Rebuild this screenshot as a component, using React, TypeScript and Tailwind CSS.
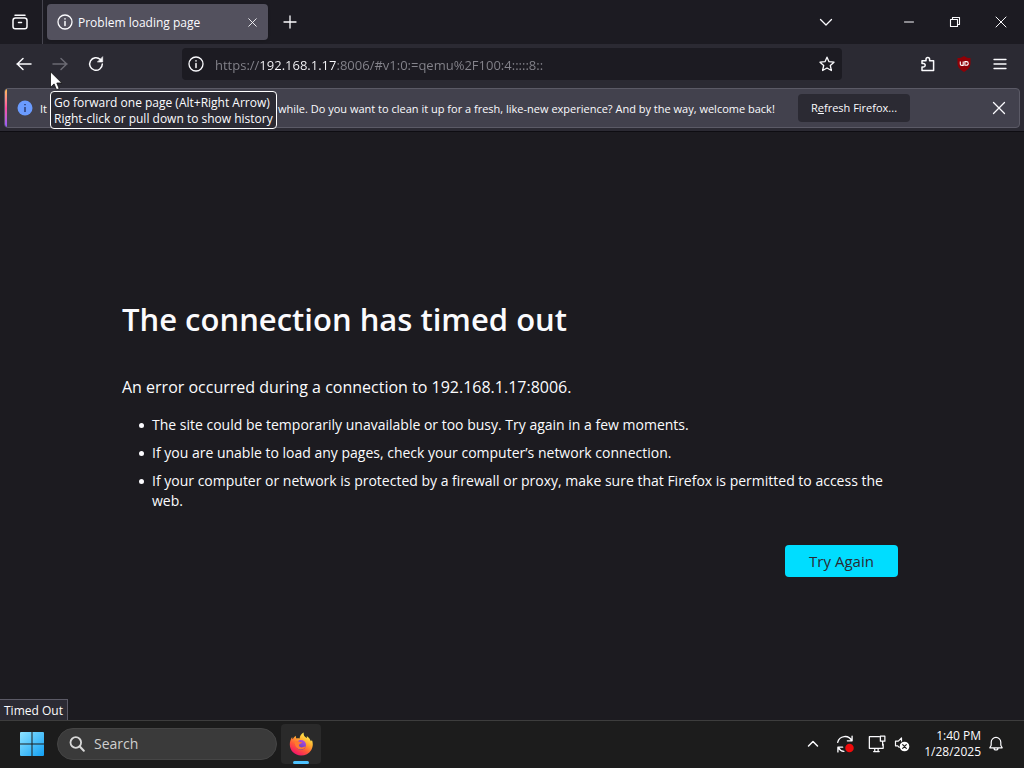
import type { ReactNode } from "react";

const Icon = ({ size = 16, className = "", children }: { size?: number; className?: string; children: ReactNode }) => (
  <svg width={size} height={size} viewBox="0 0 16 16" fill="none" stroke="currentColor" strokeWidth="1.3" strokeLinecap="round" strokeLinejoin="round" className={className} aria-hidden="true">
    {children}
  </svg>
);

const InfoIcon = () => (
  <Icon>
    <circle cx="8" cy="8" r="7" />
    <path d="M8 7.4v4M8 4.8v.2" strokeWidth="1.5" />
  </Icon>
);

const CloseIcon = ({ size }: { size: number }) => (
  <Icon size={size}>
    <path d="M2.5 2.5l11 11M13.5 2.5l-11 11" />
  </Icon>
);

const IconButton = ({ label, className = "", children }: { label: string; className?: string; children: ReactNode }) => (
  <button type="button" aria-label={label} className={`flex h-8 shrink-0 items-center justify-center ${className}`}>
    {children}
  </button>
);

const FirefoxLogo = () => (
  <svg width="24" height="24" viewBox="0 0 24 24" aria-hidden="true">
    <defs>
      <linearGradient id="fx-body" x1="18" y1="2" x2="6" y2="22" gradientUnits="userSpaceOnUse">
        <stop offset="0" stopColor="#fff44f" />
        <stop offset="0.35" stopColor="#ffa930" />
        <stop offset="0.65" stopColor="#ff5a36" />
        <stop offset="1" stopColor="#f4126b" />
      </linearGradient>
      <linearGradient id="fx-globe" x1="14" y1="8" x2="10" y2="17" gradientUnits="userSpaceOnUse">
        <stop offset="0" stopColor="#b44be0" />
        <stop offset="1" stopColor="#5a3fc0" />
      </linearGradient>
    </defs>
    <path d="M14.8.5c-.5 2 .3 3.3 1.8 4.7l1.3.9c.1-.8 0-1.500-.2-2.200 2.300 1.400 3.600 3.400 4.200 5.400.9-.3.9-1 .8-1.700C24.400 11 24 15 22.300 17.900 20 21.700 16.300 23.500 12 23.500 5.800 23.500.8 18.700.8 12.600c0-3 .9-5.500 2.400-7.500 0 .9.100 1.500.5 2.200.8-1.600 1.700-2.600 3.200-3.500-.2 1 .1 2 .8 2.700 1-.3 2-.2 2.900 0C10.700 4 12.300 1.700 14.800.5z" fill="url(#fx-body)" />
    <circle cx="12" cy="13" r="5" fill="url(#fx-globe)" />
    <path d="M5.800 9.600c1.600-.9 3.500-.7 4.700.1.800.5 2 .6 2.700.6-.2 1.300-2.700 1.400-3.200 2.500-.4 1.400.8 2.500 2.400 2.600 1.900 0 2.900-1.300 4.300-.8-1 2-3 3.200-5.200 3-3.600-.2-6.100-3.700-5.700-8z" fill="#ff7a2f" />
  </svg>
);

const WindowsLogo = () => (
  <svg width="24" height="24" viewBox="0 0 24 24" aria-hidden="true">
    <defs>
      <linearGradient id="win" x1="0" y1="0" x2="24" y2="24" gradientUnits="userSpaceOnUse">
        <stop offset="0" stopColor="#8de3ff" />
        <stop offset="1" stopColor="#12a0f5" />
      </linearGradient>
    </defs>
    <path d="M0 1q0-1 1-1h10.500v11.500H0zM12.500 0H23q1 0 1 1v10.500H12.500zM0 12.500h11.500V24H1q-1 0-1-1zM12.500 12.500H24V23q0 1-1 1H12.500z" fill="url(#win)" />
  </svg>
);

const TabBar = () => (
  <header className="flex h-11 items-center bg-[#1c1b22]">
    <div className="flex h-full w-[43px] shrink-0 items-center justify-center border-r border-[#46454f] pr-0.5">
      <IconButton label="View recent browsing" className="w-8">
        <Icon>
          <path d="M3 1.200h10M3.500 4h9q2.500 0 2.500 2.500v6q0 2.300-2.300 2.300H3.300Q1 14.800 1 12.500v-6Q1 4 3.500 4zM6.500 8.500h3" strokeWidth="1.500" />
        </Icon>
      </IconButton>
    </div>
    <div className="ml-1 flex h-9 w-[221px] items-center rounded bg-[#53515e] pl-[10px] pr-1 shadow">
      <InfoIcon />
      <span className="ml-[5px] flex-1 truncate pt-0.5 text-[12px]">Problem loading page</span>
      <IconButton label="Close tab" className="w-6">
        <CloseIcon size={11} />
      </IconButton>
    </div>
    <IconButton label="Open a new tab" className="ml-[6px] w-8">
      <Icon>
        <path d="M8 2v12M2 8h12" />
      </Icon>
    </IconButton>
    <IconButton label="List all tabs" className="ml-auto mr-11 w-8">
      <Icon>
        <path d="M2.500 5.500L8 11l5.500-5.500" />
      </Icon>
    </IconButton>
    <IconButton label="Minimize" className="w-[46px]">
      <Icon>
        <path d="M3.500 8h9" strokeWidth="1" />
      </Icon>
    </IconButton>
    <IconButton label="Restore" className="w-[46px]">
      <Icon>
        <path d="M3.500 5.500h7v7h-7zM5.500 5.500v-2h7v7h-2" strokeWidth="1.100" />
      </Icon>
    </IconButton>
    <IconButton label="Close window" className="w-[46px]">
      <Icon>
        <path d="M3 3l10 10M13 3L3 13" strokeWidth="1" />
      </Icon>
    </IconButton>
  </header>
);

const ForwardButton = () => (
  <div className="relative">
    <IconButton label="Go forward" className="w-9 text-[#6b6a73]">
      <Icon>
        <path d="M1 8h14M9 2.500L14.700 8 9 13.500" strokeWidth="1.500" />
      </Icon>
    </IconButton>
    <div role="tooltip" className="absolute left-2 top-[43px] z-10 whitespace-nowrap rounded border border-white bg-[#2b2a33] px-[3px] pb-px pt-[3px] text-[12px] leading-4">
      Go forward one page (Alt+Right Arrow)
      <br />
      Right-click or pull down to show history
    </div>
    <svg width="13" height="20" viewBox="0 0 13 20" className="absolute left-2 top-[23px] z-20" aria-hidden="true">
      <path d="M.5.800v15.500l3.600-3.400 2.400 5.900 2.700-1.100-2.400-5.700h5z" fill="#fff" stroke="#111" strokeWidth=".8" />
    </svg>
  </div>
);

const NavBar = () => (
  <nav aria-label="Navigation" className="flex h-10 items-center bg-[#2b2a33] px-[6px]">
    <IconButton label="Go back" className="w-9">
      <Icon>
        <path d="M15 8H1M7 2.500L1.300 8 7 13.500" strokeWidth="1.500" />
      </Icon>
    </IconButton>
    <ForwardButton />
    <IconButton label="Reload" className="w-9">
      <Icon>
        <path d="M14.300 8A6.300 6.300 0 1 1 12.400 3.500" strokeWidth="1.500" />
        <path d="M14.700 1v5h-5z" fill="currentColor" strokeWidth=".6" />
      </Icon>
    </IconButton>
    <div className="ml-[68px] mr-[68px] flex h-8 min-w-0 flex-1 items-center rounded bg-[#1c1b22] pl-[6px] pr-[7px]">
      <InfoIcon />
      <input
        aria-label="Search or enter address"
        defaultValue="https://192.168.1.17:8006/#v1:0:=qemu%2F100:4:::::8::"
        className="ml-[11px] h-6 min-w-0 flex-1 bg-[linear-gradient(90deg,#85848c_45px,#fbfbfe_45px,#fbfbfe_121px,#85848c_121px)] bg-clip-text pt-0.5 text-[13px] text-transparent outline-none"
      />
      <button type="button" aria-label="Bookmark this page">
        <Icon>
          <path d="M8 1.200l2 4.500 5 .5-3.700 3.300 1.100 5L8 12l-4.400 2.500 1.100-5L1 6.200l5-.5z" />
        </Icon>
      </button>
    </div>
    <IconButton label="Extensions" className="w-9">
      <Icon>
        <path d="M2 14.500V11h1.500a1.700 1.700 0 0 0 0-3.400H2V4.800h4V3.200a1.800 1.800 0 0 1 3.600 0v1.600h4v9.700z" strokeWidth="1.500" />
      </Icon>
    </IconButton>
    <IconButton label="uBlock Origin" className="w-9">
      <svg width="16" height="16" viewBox="0 0 16 16" aria-hidden="true">
        <path d="M8 0c2.500 1.700 4 2 6.500 2v5c0 4-2 6.500-6.500 9-4.500-2.500-6.500-5-6.500-9V2C4 2 5.500 1.700 8 0z" fill="#900006" />
        <path d="M4.300 5.500v2.700q0 1.200 1.500 1.200h1.400V5.500M8.900 5.600h1.500a1.800 1.800 0 0 1 0 3.700H8.900z" fill="none" stroke="#fff" strokeWidth="1.100" />
      </svg>
    </IconButton>
    <IconButton label="Open application menu" className="w-9">
      <Icon>
        <path d="M2 3.500h12M2 8h12M2 12.500h12" />
      </Icon>
    </IconButton>
  </nav>
);

const NotificationBar = () => (
  <div className="border-b border-[#0e0d12] bg-[#2b2a33] px-1 pb-[3px] pt-1">
    <div className="flex h-10 items-center overflow-hidden rounded border border-[#5b5a66] bg-[#42414d]">
      <div className="h-full w-[2px] shrink-0 bg-linear-to-b from-[#ffbd4f] via-[#ff4aa2] to-[#9059ff]" />
      <svg width="16" height="16" viewBox="0 0 16 16" className="ml-[10px] shrink-0" aria-hidden="true">
        <circle cx="8" cy="8" r="7.500" fill="#6a9bff" />
        <path d="M8 7v5M8 4v1.300" stroke="#2b3a70" strokeWidth="1.500" />
      </svg>
      <p className="ml-[7px] w-[740px] whitespace-nowrap pt-0.5 text-[11px]">
        <span className="inline-block w-[238px]">It looks like you haven’t started Firefox in a</span>
        while. Do you want to clean it up for a fresh, like-new experience? And by the way, welcome back!
      </p>
      <button type="button" className="ml-[18px] h-7 w-28 shrink-0 rounded bg-[#2b2a33] text-[11px] font-medium">
        R<span className="underline">e</span>fresh Firefox...
      </button>
      <IconButton label="Dismiss" className="ml-auto mr-1 w-8">
        <CloseIcon size={16} />
      </IconButton>
    </div>
  </div>
);

const reasons = [
  "The site could be temporarily unavailable or too busy. Try again in a few moments.",
  "If you are unable to load any pages, check your computer’s network connection.",
  "If your computer or network is protected by a firewall or proxy, make sure that Firefox is permitted to access the web.",
];

const ErrorPage = () => (
  <main className="relative flex flex-1 flex-col justify-center pl-[122px] pr-[126px] pt-6">
    <h1 className="text-[31px] font-semibold leading-10">The connection has timed out</h1>
    <p className="mt-9 text-[16px] leading-6">An error occurred during a connection to 192.168.1.17:8006.</p>
    <ul className="mt-4 space-y-2 pl-[17px] text-[14px] leading-5">
      {reasons.map((reason) => (
        <li key={reason} className="flex gap-2 before:mt-2 before:size-[5px] before:shrink-0 before:rounded-full before:bg-current">
          {reason}
        </li>
      ))}
    </ul>
    <button type="button" className="mt-[34px] h-8 w-[113px] self-end rounded bg-[#00ddff] text-[15px] font-medium text-[#2b2a33]">
      Try Again
    </button>
    <div role="status" className="absolute bottom-0 left-0 border-r border-t border-[#5b5a66] bg-[#2b2a33] px-1 pt-0.5 text-[12px] leading-[18px]">
      Timed Out
    </div>
  </main>
);

const Taskbar = () => (
  <footer className="flex h-12 items-center border-t border-[#3d3d3d] bg-[#1c1c1c] px-4 pb-0.5">
    <IconButton label="Start" className="w-8">
      <WindowsLogo />
    </IconButton>
    <label className="ml-[9px] flex h-8 w-[220px] items-center rounded-full border border-[#454545] bg-[#3a3a3a] px-[11px]">
      <Icon className="shrink-0 text-[#d8d8d8]">
        <circle cx="6.800" cy="6.500" r="5.300" strokeWidth="1.800" />
        <path d="M10.800 10.500l4 4.300" strokeWidth="2" />
      </Icon>
      <input type="search" aria-label="Search" placeholder="Search" className="ml-[9px] min-w-0 flex-1 bg-transparent text-[14px] outline-none placeholder:text-[#cfcfcf]" />
    </label>
    <button type="button" aria-label="Firefox" className="ml-1 flex h-10 w-10 flex-col items-center justify-end rounded bg-[#2a2a2a]">
      <FirefoxLogo />
      <span className="mt-[5px] h-[3px] w-4 rounded-full bg-[#4cc2ff]" />
    </button>
    <div className="ml-auto flex items-center">
      <IconButton label="Show hidden icons" className="mr-[5px] w-6">
        <Icon>
          <path d="M3.500 10L8 5.500l4.500 4.500" strokeWidth="1.500" />
        </Icon>
      </IconButton>
      <IconButton label="Windows Update" className="w-[30px]">
        <Icon size={18}>
          <path d="M1.500 6.500A6.700 6.700 0 0 1 14 5M14.300 1v4.200h-4.200M1.700 15v-4.200h4.200M2 11a6.700 6.700 0 0 0 5 3.600" strokeWidth="1.200" />
          <circle cx="12" cy="11.500" r="3.800" fill="#f00b0b" stroke="none" />
        </Icon>
      </IconButton>
      <IconButton label="Network" className="ml-1 w-[26px]">
        <Icon size={18}>
          <path d="M10 1.500H1.200v10.300h12.300V8M5 14.700h5M6 12v2.500M9 12v2.500M11 1h4v4.500h-4zM13 5.500V9" strokeWidth="1.100" />
        </Icon>
      </IconButton>
      <IconButton label="Volume muted" className="w-6">
        <Icon>
          <path d="M7.500 2L4.300 5.200H1.500v4.600h2.200l1.500 1.500M7.500 2v3" strokeWidth="1.200" />
          <circle cx="10.500" cy="10.500" r="4.800" fill="#fff" stroke="none" />
          <path d="M8.700 8.700l3.600 3.600M12.300 8.700l-3.600 3.600" stroke="#1c1c1c" strokeWidth="1.200" />
        </Icon>
      </IconButton>
      <button type="button" className="ml-[10px] text-right text-[12px] leading-4">
        1:40 PM
        <br />
        1/28/2025
      </button>
      <IconButton label="Notifications" className="ml-[3px] w-6">
        <Icon>
          <path d="M1.800 11.800l1.400-2.500V6.200a4.800 4.800 0 0 1 9.600 0v3.100l1.400 2.500zM6 12a2 2 0 0 0 4 0" strokeWidth="1.200" />
        </Icon>
      </IconButton>
    </div>
  </footer>
);

export default function App() {
  return (
    <div className="flex min-h-screen flex-col bg-[#1c1b20] font-['Open_Sans','Noto_Sans',sans-serif] text-[#fbfbfe]">
      <TabBar />
      <NavBar />
      <NotificationBar />
      <ErrorPage />
      <Taskbar />
    </div>
  );
}
